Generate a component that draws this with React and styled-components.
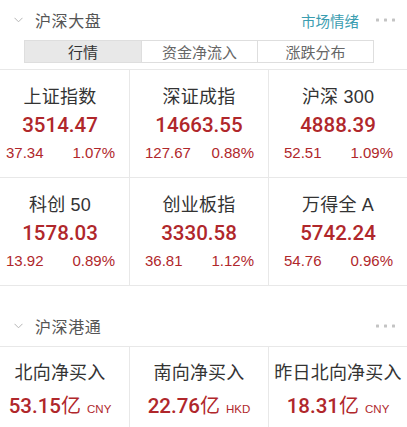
import React from 'react'
import styled, { createGlobalStyle } from 'styled-components'

const GlobalStyle = createGlobalStyle`
  * { box-sizing: border-box; margin: 0; padding: 0; }
  body {
    background: #fff;
    overflow: hidden;
    font-family: "Liberation Sans", "Noto Sans CJK SC", sans-serif;
  }
`

const RED = '#b0272b'
const LINE = '#e8e8e8'

const indexes = [
  { name: '上证指数', value: '3514.47', change: '37.34', pct: '1.07%' },
  { name: '深证成指', value: '14663.55', change: '127.67', pct: '0.88%' },
  { name: '沪深 300', value: '4888.39', change: '52.51', pct: '1.09%' },
  { name: '科创 50', value: '1578.03', change: '13.92', pct: '0.89%' },
  { name: '创业板指', value: '3330.58', change: '36.81', pct: '1.12%' },
  { name: '万得全 A', value: '5742.24', change: '54.76', pct: '0.96%' },
]

const flows = [
  { name: '北向净买入', value: '53.15', unit: 'CNY' },
  { name: '南向净买入', value: '22.76', unit: 'HKD' },
  { name: '昨日北向净买入', value: '18.31', unit: 'CNY' },
]

const App = () => {
  return (
    <Page>
      <GlobalStyle />
      <Section tabs>
        <Header>
          <Chevron />
          <Title>沪深大盘</Title>
          <Link>市场情绪</Link>
          <More />
        </Header>
        <Tabs>
          <Tab active>行情</Tab>
          <Tab>资金净流入</Tab>
          <Tab>涨跌分布</Tab>
        </Tabs>
      </Section>
      <Grid>
        {indexes.map((item) => (
          <Cell key={item.name}>
            <Name>{item.name}</Name>
            <Value>{item.value}</Value>
            <Change>
              <span>{item.change}</span>
              <span>{item.pct}</span>
            </Change>
          </Cell>
        ))}
      </Grid>
      <Spacer />
      <Section>
        <Header>
          <Chevron />
          <Title>沪深港通</Title>
          <More />
        </Header>
      </Section>
      <Grid>
        {flows.map((item) => (
          <FlowCell key={item.name}>
            <Name>{item.name}</Name>
            <FlowValue>
              {item.value}
              <Yi>亿</Yi>
              <Unit>{item.unit}</Unit>
            </FlowValue>
          </FlowCell>
        ))}
      </Grid>
    </Page>
  )
}

const Chevron = () => (
  <ChevronIcon width="9" height="6" viewBox="0 0 9 6">
    <path d="M0.5 0.8 L4.5 4.8 L8.5 0.8" fill="none" stroke="#b5b5b5" strokeWidth="1" />
  </ChevronIcon>
)

const More = () => (
  <MoreIcon width="19" height="4" viewBox="0 0 19 4">
    <rect x="0" y="0.5" width="3" height="3" rx="0.6" fill="#c4c4c4" />
    <rect x="8" y="0.5" width="3" height="3" rx="0.6" fill="#c4c4c4" />
    <rect x="16" y="0.5" width="3" height="3" rx="0.6" fill="#c4c4c4" />
  </MoreIcon>
)

const Page = styled.div`
  width: 416px;
  margin-left: -9px;
  background: #fff;
`

const Section = styled.div`
  border-bottom: 1px solid ${LINE};
  padding-bottom: ${props => (props.tabs ? '6px' : '0')};
`

const Header = styled.div`
  display: flex;
  align-items: center;
  height: 40px;
  padding: 0 12px 0 23px;
`

const ChevronIcon = styled.svg`
  display: block;
  margin-right: 12px;
`

const Title = styled.div`
  flex: 1;
  font-size: 16px;
  letter-spacing: 0.6px;
  color: #555;
`

const Link = styled.div`
  font-size: 14.5px;
  color: #3a9db0;
  margin-right: 17px;
`

const MoreIcon = styled.svg`
  display: block;
`

const Tabs = styled.div`
  display: grid;
  grid-template-columns: repeat(3, 1fr);
  width: 350px;
  height: 23px;
  margin: 0 auto;
  border: 1px solid #dedede;
`

const Tab = styled.div`
  display: flex;
  align-items: center;
  justify-content: center;
  font-size: 15px;
  color: ${props => (props.active ? '#333' : '#666')};
  background: ${props => (props.active ? '#e8e8e8' : '#fff')};
  & + & {
    border-left: 1px solid #dedede;
  }
`

const Grid = styled.div`
  display: grid;
  grid-template-columns: 139px 139px 138px;
`

const Cell = styled.div`
  height: 108px;
  padding-top: 13px;
  border-bottom: 1px solid ${LINE};
  text-align: center;
  &:not(:nth-child(3n)) {
    border-right: 1px solid ${LINE};
  }
`

const Name = styled.div`
  font-size: 18px;
  line-height: 28px;
  color: #333;
  letter-spacing: 0.2px;
`

const Value = styled.div`
  font-family: Roboto, "Liberation Sans", sans-serif;
  font-weight: 500;
  font-size: 20.5px;
  line-height: 28px;
  color: ${RED};
`

const Change = styled.div`
  display: flex;
  justify-content: space-between;
  padding: 0 14px 0 15px;
  font-size: 15px;
  line-height: 28px;
  color: ${RED};
`

const Spacer = styled.div`
  height: 20px;
`

const FlowCell = styled.div`
  height: 90px;
  padding-top: 12px;
  text-align: center;
  &:not(:nth-child(3n)) {
    border-right: 1px solid ${LINE};
  }
`

const FlowValue = styled.div`
  margin-top: 2px;
  font-family: Roboto, "Liberation Sans", sans-serif;
  font-weight: 500;
  font-size: 20.5px;
  line-height: 32px;
  color: ${RED};
`

const Yi = styled.span`
  font-family: "Noto Sans CJK SC", sans-serif;
  font-weight: 400;
  font-size: 20px;
`

const Unit = styled.span`
  font-family: "Liberation Sans", sans-serif;
  font-weight: 400;
  font-size: 11.5px;
  margin-left: 6px;
`

export default App
